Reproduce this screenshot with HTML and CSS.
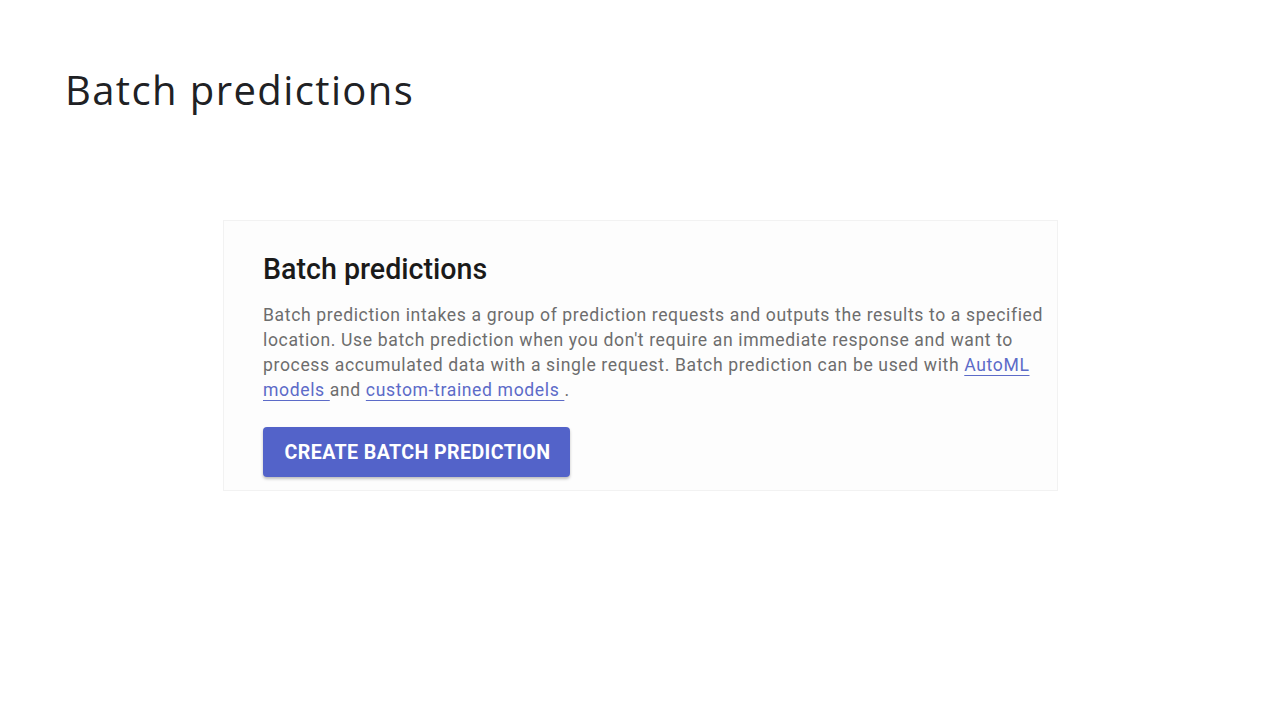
FILE: index.html
```html
<!DOCTYPE html>
<html>
<head>
<meta charset="utf-8">
<link rel="stylesheet" href="styles.css">
</head>
<body>
<div class="slide">
  <h1 class="slide-title">Batch predictions</h1>
  <div class="card-wrap">
    <section class="card">
      <h2 class="card-title">Batch predictions</h2>
      <p class="card-text">Batch prediction intakes a group of prediction requests and outputs the results to a specified location. Use batch prediction when you don't require an immediate response and want to process accumulated data with a single request. Batch prediction can be used with <a class="link" href="#">AutoML models </a> and <a class="link" href="#">custom-trained models </a>.</p>
      <button class="btn">CREATE BATCH PREDICTION</button>
    </section>
  </div>
</div>
</body>
</html>
```
FILE: styles.css
```css
html, body {
  margin: 0;
  padding: 0;
  background: #ffffff;
}
.slide {
  width: 1280px;
  height: 720px;
  box-sizing: border-box;
  padding: 62px 0 0 65px;
}
.slide-title {
  margin: 0;
  font-family: "Open Sans", sans-serif;
  font-weight: 400;
  font-size: 40px;
  line-height: 56px;
  color: #202124;
  letter-spacing: 1.4px;
}
.card-wrap {
  margin-top: 102px;
  padding-left: 158px;
}
.card {
  width: 835px;
  box-sizing: border-box;
  border: 1px solid #f2f2f2;
  background: #fdfdfd;
  padding: 31px 6px 13px 39px;
  font-family: Roboto, sans-serif;
}
.card-title {
  margin: 0;
  font-size: 28.6px;
  font-weight: 500;
  line-height: 34px;
  color: #1a1a1a;
}
.card-text {
  margin: 17px 0 0 0;
  font-size: 17.6px;
  line-height: 25px;
  color: #6d6d6d;
  letter-spacing: 0.62px;
}
.link {
  color: #5c6bc8;
  text-decoration: underline;
  text-underline-offset: 4px;
}
.btn {
  margin-top: 24px;
  display: block;
  width: 307px;
  height: 50px;
  border: none;
  border-radius: 4px;
  background: #5363c9;
  color: #ffffff;
  font-family: Roboto, sans-serif;
  font-weight: 700;
  font-size: 19.6px;
  letter-spacing: 0.4px;
  padding: 0 0 0 2px;
  box-shadow: 0 2px 3px rgba(0,0,0,0.25);
}
```
